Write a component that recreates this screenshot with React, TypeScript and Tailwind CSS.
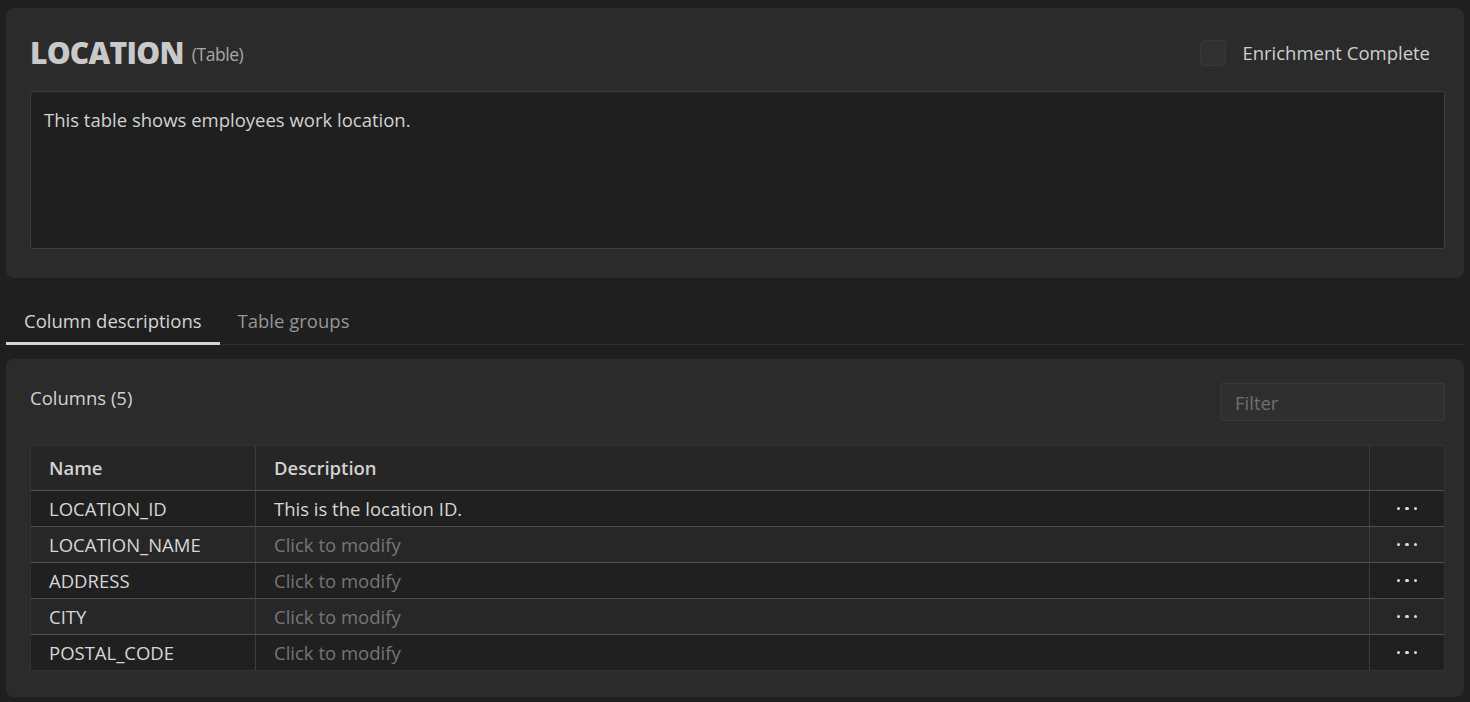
import { useState } from "react";

type Column = { name: string; description?: string };

const columns: Column[] = [
  { name: "LOCATION_ID", description: "This is the location ID." },
  { name: "LOCATION_NAME" },
  { name: "ADDRESS" },
  { name: "CITY" },
  { name: "POSTAL_CODE" },
];

function Dots() {
  return (
    <div className="flex items-center gap-[5px]">
      <span className="size-[3.5px] rounded-full bg-[#dcdcdc]" />
      <span className="size-[3.5px] rounded-full bg-[#dcdcdc]" />
      <span className="size-[3.5px] rounded-full bg-[#dcdcdc]" />
    </div>
  );
}

export default function App() {
  const [tab, setTab] = useState("columns");
  const [done, setDone] = useState(false);

  return (
    <div
      className="min-h-screen bg-[#1f1f1f] px-[6px] pt-[8px] pb-[6px] text-[18.5px] text-[#d2d2d2]"
      style={{ fontFamily: '"Open Sans", "Noto Sans", sans-serif' }}
    >
      {/* Table summary card */}
      <section className="rounded-lg bg-[#2b2b2b] pl-6 pr-[19px] pt-6 pb-[29px]">
        <div className="flex h-[42px] items-center justify-between">
          <div className="flex items-center gap-[8px]">
            <h1 className="text-[30px] font-extrabold leading-none tracking-tight text-[#c9c9c9]">
              LOCATION
            </h1>
            <span className="pt-[2px] text-[17.5px] text-[#a8a8a8] tracking-tight">(Table)</span>
          </div>
          <label className="flex items-center gap-4 pr-[15px] cursor-pointer">
            <button
              onClick={() => setDone(!done)}
              className="size-[26px] rounded-[4px] border border-[#383838] bg-[#313131]"
              aria-label="Enrichment Complete"
            />
            <span className="text-[#cfcfcf]">Enrichment Complete</span>
          </label>
        </div>
        <div className="mt-[17px] h-[158px] rounded-[3px] border border-[#3d3d3d] bg-[#1f1f1f] px-[13px] py-[14px]">
          This table shows employees work location.
        </div>
      </section>

      {/* Tabs */}
      <div className="mt-[22px] flex border-b border-[#2e2e2e]">
        <button
          onClick={() => setTab("columns")}
          className={
            tab === "columns"
              ? "-mb-px h-[45px] border-b-[3px] border-[#d4d4d4] px-[18px] text-[#d4d4d4]"
              : "-mb-px h-[45px] border-b-[3px] border-transparent px-[18px] text-[#969696]"
          }
        >
          Column descriptions
        </button>
        <button
          onClick={() => setTab("groups")}
          className={
            tab === "groups"
              ? "-mb-px h-[45px] border-b-[3px] border-[#d4d4d4] px-[18px] text-[#d4d4d4]"
              : "-mb-px h-[45px] border-b-[3px] border-transparent px-[18px] text-[#969696]"
          }
        >
          Table groups
        </button>
      </div>

      {/* Columns card */}
      <section className="mt-[14px] rounded-lg bg-[#2b2b2b] pl-6 pr-[19px] pt-6 pb-[26px]">
        <div className="flex items-start justify-between">
          <h2 className="pt-[1px] text-[#d2d2d2]">Columns (5)</h2>
          <input
            placeholder="Filter"
            className="h-[38px] w-[225px] rounded-[3px] border border-[#393939] bg-[#2f2f2f] px-[14px] text-[#d2d2d2] placeholder:text-[#6f6f6f] outline-none"
          />
        </div>

        <div className="mt-6 border border-[#333333]">
          <div className="grid h-[44px] grid-cols-[225px_1fr_74px] bg-[#262626] font-semibold text-[#d2d2d2]">
            <div className="flex items-center border-r border-[#3a3a3a] px-[18px]">Name</div>
            <div className="flex items-center border-r border-[#3a3a3a] px-[18px]">Description</div>
            <div />
          </div>
          {columns.map((col, i) => (
            <div
              key={col.name}
              className={
                i % 2 === 0
                  ? "grid h-[36px] grid-cols-[225px_1fr_74px] border-t border-[#505050] bg-[#202020]"
                  : "grid h-[36px] grid-cols-[225px_1fr_74px] border-t border-[#505050] bg-[#272727]"
              }
            >
              <div className="flex items-center border-r border-[#3a3a3a] px-[18px] text-[#d6d6d6]">
                {col.name}
              </div>
              <div
                className={
                  col.description
                    ? "flex items-center border-r border-[#3a3a3a] px-[18px] text-[#d6d6d6]"
                    : "flex items-center border-r border-[#3a3a3a] px-[18px] text-[#767676]"
                }
              >
                {col.description ?? "Click to modify"}
              </div>
              <div className="flex items-center justify-center">
                <Dots />
              </div>
            </div>
          ))}
        </div>
      </section>
    </div>
  );
}
